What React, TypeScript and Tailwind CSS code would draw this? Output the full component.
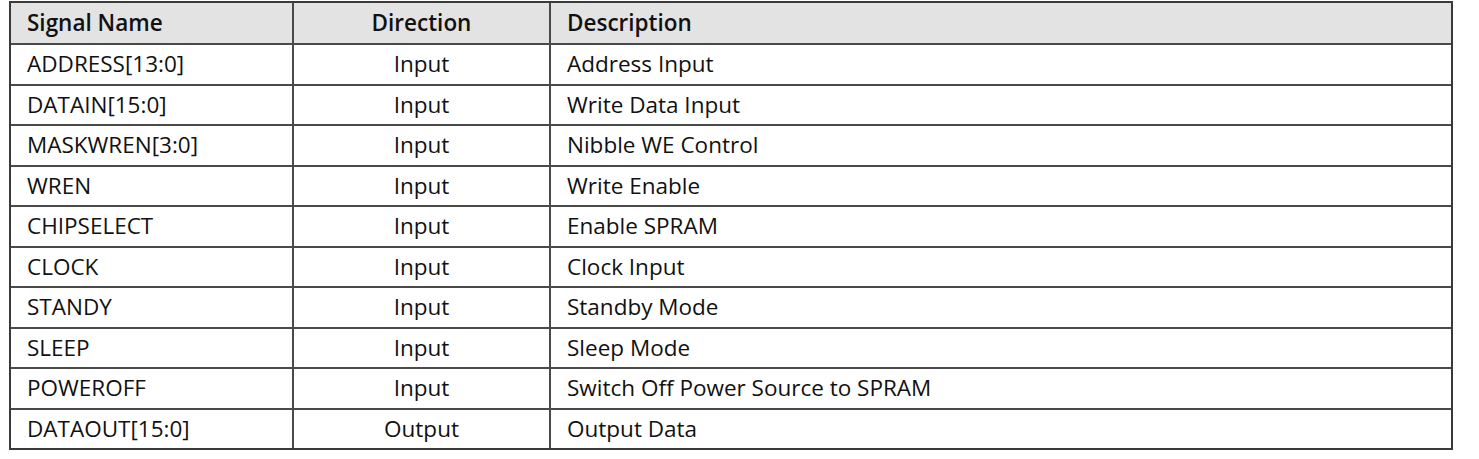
const rows = [
  { name: "ADDRESS[13:0]", dir: "Input", desc: "Address Input" },
  { name: "DATAIN[15:0]", dir: "Input", desc: "Write Data Input" },
  { name: "MASKWREN[3:0]", dir: "Input", desc: "Nibble WE Control" },
  { name: "WREN", dir: "Input", desc: "Write Enable" },
  { name: "CHIPSELECT", dir: "Input", desc: "Enable SPRAM" },
  { name: "CLOCK", dir: "Input", desc: "Clock Input" },
  { name: "STANDY", dir: "Input", desc: "Standby Mode" },
  { name: "SLEEP", dir: "Input", desc: "Sleep Mode" },
  { name: "POWEROFF", dir: "Input", desc: "Switch Off Power Source to SPRAM" },
  { name: "DATAOUT[15:0]", dir: "Output", desc: "Output Data" },
];

export default function App() {
  return (
    <div className="w-[1479px] h-[459px] bg-white pt-[1px] pl-[9px] font-['Open_Sans',sans-serif] text-[22.5px] text-[#111]">
      <div className="w-[1444px] border-2 border-[#3a3a3a]">
        <div className="grid grid-cols-[283px_257px_1fr] h-[40px] bg-[#e3e3e3] font-semibold">
          <div className="flex items-center pl-4 border-r-2 border-[#4a4a4a]">Signal Name</div>
          <div className="flex items-center justify-center border-r-2 border-[#4a4a4a]">Direction</div>
          <div className="flex items-center pl-4">Description</div>
        </div>
        {rows.map((r) => (
          <div
            key={r.name}
            className="grid grid-cols-[283px_257px_1fr] h-[40.5px] border-t-2 border-[#4a4a4a]"
          >
            <div className="flex items-center pl-4 border-r-2 border-[#4a4a4a]">{r.name}</div>
            <div className="flex items-center justify-center border-r-2 border-[#4a4a4a]">{r.dir}</div>
            <div className="flex items-center pl-4">{r.desc}</div>
          </div>
        ))}
      </div>
    </div>
  );
}
